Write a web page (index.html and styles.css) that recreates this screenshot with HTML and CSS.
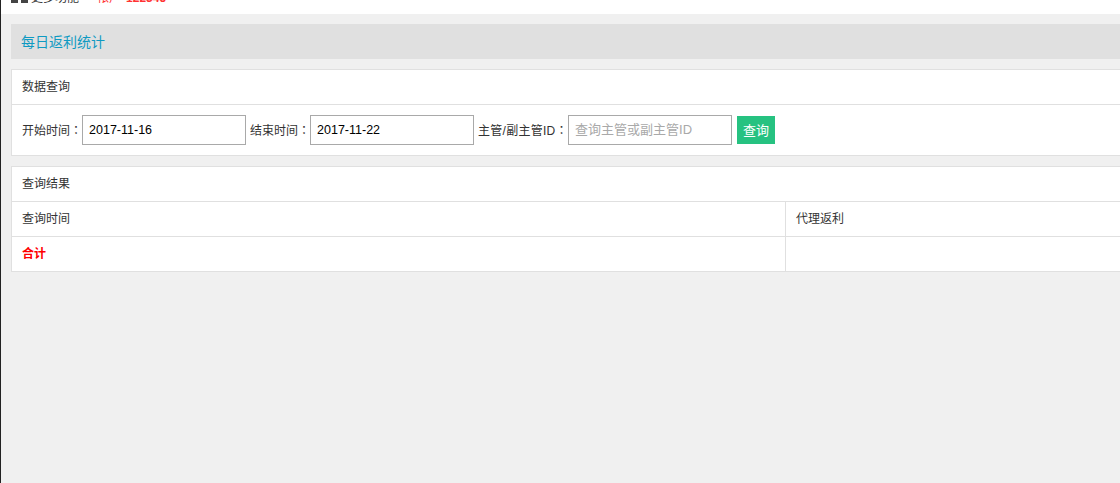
FILE: index.html
```html
<!DOCTYPE html>
<html lang="zh-CN">
<head>
<meta charset="utf-8">
<title>每日返利统计</title>
<link rel="stylesheet" href="styles.css">
</head>
<body>
<div class="page">
  <header class="topbar">
    <div class="topbar-inner">
      <span class="grid-icon"><i></i><i></i></span>
      <span class="more">更多功能</span>
      <span class="account">帐户</span>
      <span class="account-id">122345</span>
    </div>
  </header>
  <main class="content">
    <h1 class="title">每日返利统计</h1>
    <section class="panel">
      <div class="panel-head">数据查询</div>
      <form class="query">
        <label class="field-label">开始时间<span class="colon" lang="zh-TW">：</span></label>
        <input class="field" type="text" value="2017-11-16">
        <label class="field-label">结束时间<span class="colon" lang="zh-TW">：</span></label>
        <input class="field" type="text" value="2017-11-22">
        <label class="field-label field-label-wide">主管/副主管ID<span class="colon" lang="zh-TW">：</span></label>
        <input class="field" type="text" placeholder="查询主管或副主管ID">
        <button class="btn" type="button">查询</button>
      </form>
    </section>
    <section class="panel">
      <div class="panel-head">查询结果</div>
      <div class="row">
        <div class="cell cell-time">查询时间</div>
        <div class="cell cell-value">代理返利</div>
      </div>
      <div class="row">
        <div class="cell cell-time total">合计</div>
        <div class="cell cell-value"></div>
      </div>
    </section>
  </main>
</div>
</body>
</html>
```
FILE: styles.css
```css
* { box-sizing: border-box; }
html, body { margin: 0; height: 100%; }
body {
  background: #f0f0f0;
  font-family: "Liberation Sans", "Noto Sans CJK SC", sans-serif;
  font-size: 12px;
  color: #333;
  overflow: hidden;
}
.page {
  height: 483px;
  border-left: 1px solid #222;
  overflow: hidden;
}
.topbar {
  height: 14px;
  background: #fff;
  overflow: hidden;
}
.topbar-inner {
  display: flex;
  align-items: flex-end;
  height: 14px;
  margin-top: -9px;
  padding-left: 10px;
  line-height: 14px;
}
.grid-icon { display: flex; gap: 3px; align-self: flex-start; margin-top: 5px; }
.grid-icon i { display: block; width: 7px; height: 7px; background: #444; }
.more { margin-left: 3px; color: #333; }
.account { margin-left: 18px; color: #f33; }
.account-id { margin-left: 5px; color: #f33; font-weight: bold; }
.content { padding: 10px 0 0 10px; width: 1130px; }
.title {
  margin: 0 0 10px;
  height: 35px;
  line-height: 36px;
  padding-left: 10px;
  background: #e0e0e0;
  color: #0f9ac2;
  font-size: 14px;
  font-weight: normal;
}
.panel {
  background: #fff;
  border: 1px solid #e0e0e0;
  margin-bottom: 10px;
}
.panel-head {
  height: 35px;
  line-height: 34px;
  padding-left: 10px;
  border-bottom: 1px solid #e0e0e0;
}
.query {
  display: flex;
  align-items: center;
  height: 50px;
  padding-left: 10px;
}
.field-label { white-space: nowrap; position: relative; top: -1px; }
.field-label-wide { width: 90px; letter-spacing: 0.25px; }
.colon { font-family: "Noto Sans CJK TC", sans-serif; }
.field {
  width: 164px;
  height: 30px;
  margin-right: 4px;
  padding: 0 6px 1px;
  border: 1px solid #a9a9a9;
  background: #fff;
  color: #000;
  font: 12.5px "Liberation Sans", "Noto Sans CJK SC", sans-serif;
  outline: none;
}
.field::placeholder { color: #a9a9a9; opacity: 1; font-size: 13px; }
.btn {
  width: 38px;
  height: 28px;
  margin-left: 1px;
  padding: 0 0 2px;
  border: 0;
  background: #26c281;
  color: #fff;
  font: 13px "Liberation Sans", "Noto Sans CJK SC", sans-serif;
}
.row { display: flex; height: 35px; border-bottom: 1px solid #e0e0e0; }
.row:last-child { height: 34px; border-bottom: 0; }
.cell { line-height: 34px; padding-left: 10px; }
.cell-time { width: 774px; border-right: 1px solid #e0e0e0; }
.cell-value { flex: 1; }
.total { color: #f00; font-weight: bold; }
```
